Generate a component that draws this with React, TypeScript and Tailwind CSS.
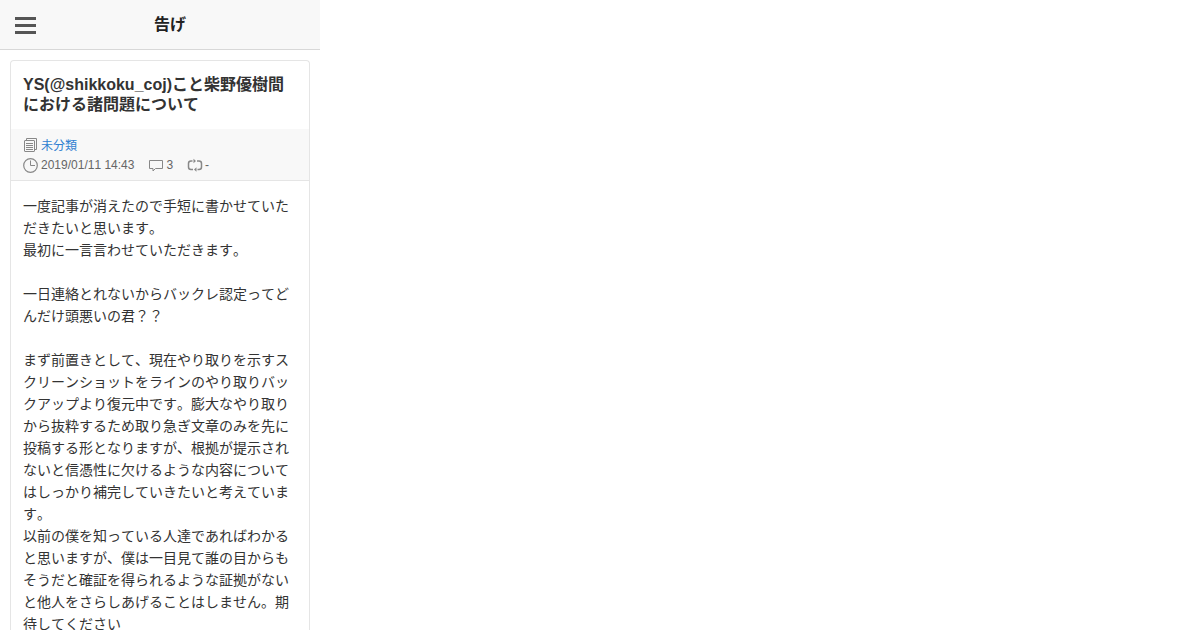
import type { ReactNode } from "react";

const paragraphs = [
  "一度記事が消えたので手短に書かせていただきたいと思います。",
  "最初に一言言わせていただきます。",
  "",
  "一日連絡とれないからバックレ認定ってどんだけ頭悪いの君？？",
  "",
  "まず前置きとして、現在やり取りを示すスクリーンショットをラインのやり取りバックアップより復元中です。膨大なやり取りから抜粋するため取り急ぎ文章のみを先に投稿する形となりますが、根拠が提示されないと信憑性に欠けるような内容についてはしっかり補完していきたいと考えています。",
  "以前の僕を知っている人達であればわかると思いますが、僕は一目見て誰の目からもそうだと確証を得られるような証拠がないと他人をさらしあげることはしません。期待してください",
];

const Icon = ({ children }: { children: ReactNode }) => (
  <svg
    width="16"
    height="16"
    viewBox="0 0 16 16"
    fill="none"
    stroke="#888"
    className="shrink-0"
  >
    {children}
  </svg>
);

const CategoryIcon = () => (
  <Icon>
    <path d="M3.5 3V1.5h10v11H12" />
    <rect x="1.5" y="3.5" width="10" height="11" rx="0.5" />
    <path d="M3 6.5h7M3 8.5h7M3 10.5h7M3 12.5h7" />
  </Icon>
);

const ClockIcon = () => (
  <Icon>
    <circle cx="7.5" cy="8.5" r="6.8" strokeWidth="1.2" />
    <path d="M7.5 3.5v5H12" />
  </Icon>
);

const CommentIcon = () => (
  <Icon>
    <path d="M1.5 3.5h13v8h-7L5 14v-2.500H1.500z" />
  </Icon>
);

const TrackbackIcon = () => (
  <Icon>
    <path
      d="M5.500 4H4Q1.500 4 1.500 6.500V10q0 2.500 2.500 2.500h2M10 4h2q2.500 0 2.500 2.500V10q0 2.500-2.500 2.500h-1.500"
      strokeWidth="1.5"
    />
    <path
      d="M6.500 1.800v4.400L9 4zM9.500 10.300v4.400L7 12.500z"
      fill="#888"
      stroke="none"
    />
  </Icon>
);

const Header = () => (
  <header className="flex h-[50px] items-center border-b border-[#d8d8d8] bg-[#f8f8f8] pl-[15px]">
    <div className="flex w-[21px] flex-col gap-1 pt-0.5">
      <span className="h-[3px] bg-[#555]" />
      <span className="h-[3px] bg-[#555]" />
      <span className="h-[3px] bg-[#555]" />
    </div>
    <h1 className="ml-[14px] mr-[30px] flex-1 text-center text-base leading-5 font-bold text-[#222]">
      告げ
    </h1>
  </header>
);

export default function App() {
  return (
    <div
      lang="ja"
      className="h-screen overflow-hidden bg-white font-['Liberation_Sans','Noto_Sans_CJK_JP',sans-serif] [font-kerning:none]"
    >
      <div className="w-[320px]">
        <Header />

        <article className="mx-[10px] mt-[10px] rounded-t border border-b-0 border-[#e5e5e5]">
          <h2 className="px-3 pt-[14px] pb-[14px] text-base leading-5 font-bold text-[#333]">
            YS(@shikkoku_coj)こと柴野優樹間における諸問題について
          </h2>

          <div className="border-b border-[#e5e5e5] bg-[#f8f8f8] px-3 pt-1.5 pb-[5px] text-xs text-[#666]">
            <div className="flex h-5 items-center gap-0.5">
              <CategoryIcon />
              <a className="pt-0.5 leading-5 text-[#2f7fd1]">未分類</a>
            </div>
            <div className="flex h-5 items-center leading-5">
              <ClockIcon />
              <span className="ml-0.5">2019/01/11 14:43</span>
              <span className="ml-[14px] flex items-center gap-0.5">
                <CommentIcon />3
              </span>
              <span className="ml-[14px] flex items-center gap-0.5">
                <TrackbackIcon />-
              </span>
            </div>
          </div>

          <div className="px-3 pt-[14px] text-sm leading-[22px] text-[#333]">
            {paragraphs.map((text, i) => (
              <p key={i} className="min-h-[22px]">
                {text}
              </p>
            ))}
          </div>
        </article>
      </div>
    </div>
  );
}
